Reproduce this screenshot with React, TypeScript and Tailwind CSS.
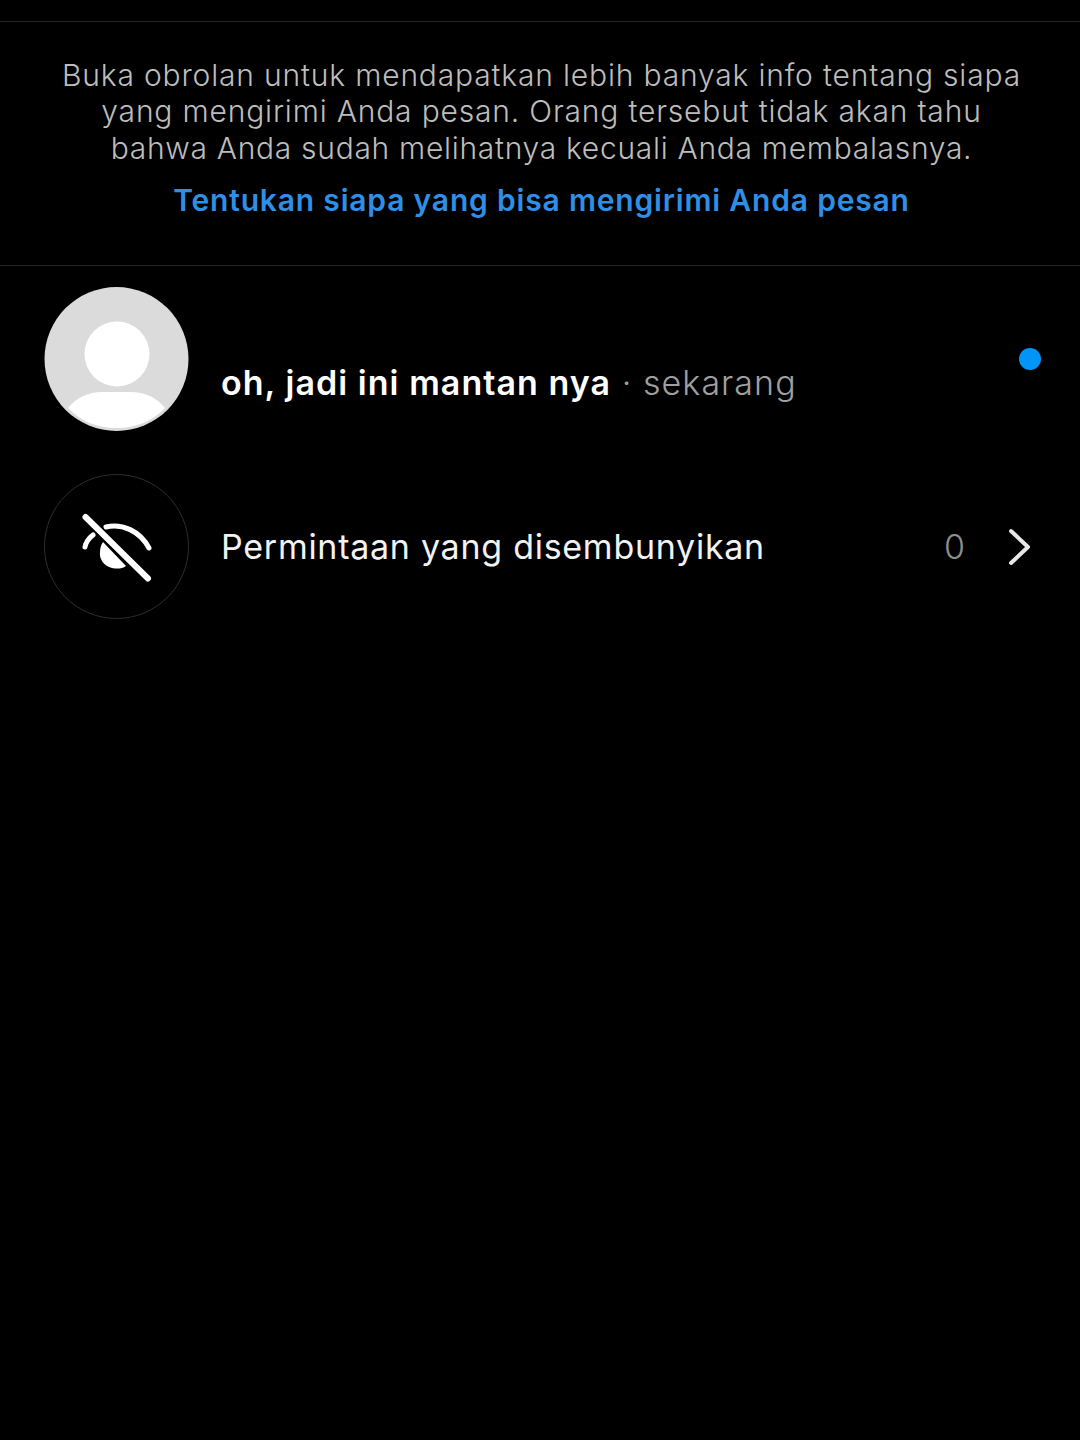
import React from "react";

const font = { fontFamily: "Inter, 'Liberation Sans', sans-serif" };

function Avatar() {
    return (
        <svg width="145" height="145" viewBox="0 0 145 145" className="shrink-0">
            <circle cx="72.5" cy="72" r="72" fill="#dbdbdb" />
            <circle cx="73" cy="67" r="32.5" fill="#ffffff" />
            <path d="M24 121 C32 111 44 105 58 105 L87 105 C101 105 113 111 121 121 C109 134 92 141 72.5 141 C53 141 36 134 24 121 Z" fill="#ffffff" />
        </svg>
    );
}

function HiddenIcon() {
    return (
        <svg width="145" height="145" viewBox="0 0 145 145" className="shrink-0">
            <circle cx="72.5" cy="72.5" r="72" fill="#000000" stroke="#2e2e2e" strokeWidth="1" />
            <g fill="none" stroke="#ffffff" strokeLinecap="round">
                <path d="M41.5 43 L104 104.5" strokeWidth="6" />
                <path d="M62 53 C78 49 96 57 105 74" strokeWidth="5" />
                <path d="M49 61 C45 64 42 68 41 73" strokeWidth="5" />
            </g>
            <path d="M59 68 L82 92 C78 95 73 95 68 94 C60 92 55 85 56 78 C56 74 57 71 59 68 Z" fill="#ffffff" />
        </svg>
    );
}

export default function App() {
    return (
        <div className="min-h-[1440px] w-[1080px] bg-black" style={font}>
            <div className="pt-[21px]">
                <div className="h-px bg-[#262626]"></div>
            </div>

            <section className="h-[243px] pt-[35px] pl-[3px] text-center">
                <p className="text-[30px] leading-[36.4px] font-light tracking-[0.82px] text-[#bdbdbd]">
                    Buka obrolan untuk mendapatkan lebih banyak info tentang siapa
                    <br />
                    yang mengirimi Anda pesan. Orang tersebut tidak akan tahu
                    <br />
                    <span className="tracking-[0.7px]">bahwa Anda sudah melihatnya kecuali Anda membalasnya.</span>
                </p>
                <a className="mt-[16px] block text-[30px] leading-[36px] font-semibold tracking-[0.82px] text-[#2f8fe6]">
                    Tentukan siapa yang bisa mengirimi Anda pesan
                </a>
            </section>

            <div className="h-px bg-[#262626]"></div>

            <div className="flex flex-col gap-[42px] pt-[21px] pl-[44px]">
                <div className="flex items-center pr-[39px]">
                    <Avatar />
                    <div className="ml-[32px] flex-1 pt-[46px] text-[34px] leading-[42px] tracking-[1.05px]">
                        <span className="font-semibold text-white">oh, jadi ini mantan nya</span>
                        <span className="font-light text-[#a0a0a0]"> · sekarang</span>
                    </div>
                    <div className="mb-[2px] h-[22px] w-[22px] rounded-full bg-[#0095f6]"></div>
                </div>

                <div className="flex items-center pr-[48px]">
                    <HiddenIcon />
                    <div className="ml-[32px] flex-1 text-[34px] leading-[42px] font-normal tracking-[0.73px] text-[#f2f2f2]">
                        Permintaan yang disembunyikan
                    </div>
                    <span className="text-[34px] leading-[42px] font-light text-[#8e8e8e]">0</span>
                    <svg width="24" height="38" viewBox="0 0 24 38" className="ml-[43px]">
                        <path d="M3 3 L20 19 L3 35" fill="none" stroke="#e8e8e8" strokeWidth="4" strokeLinecap="round" strokeLinejoin="round" />
                    </svg>
                </div>
            </div>
        </div>
    );
}
